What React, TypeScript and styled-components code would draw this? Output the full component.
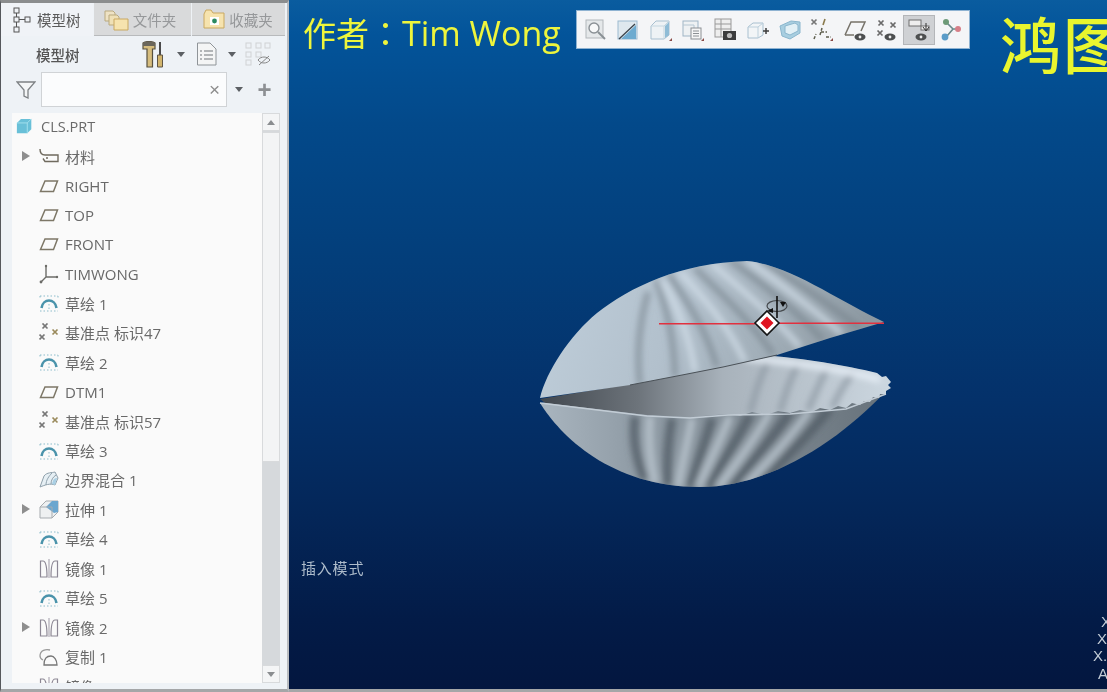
import React from "react";
import styled, { createGlobalStyle } from "styled-components";

const Global = createGlobalStyle`
  html, body { margin: 0; padding: 0; width: 1107px; height: 692px; overflow: hidden; background: #03153d; }
`;
const font = `"Noto Sans CJK SC", "Noto Sans", sans-serif`;
const Page = styled.div`
  display: flex; width: 1107px; height: 692px; overflow: hidden;
  font-family: ${font}; filter: blur(0.45px);
`;
const Sidebar = styled.aside`
  width: 289px; flex: none; height: 692px; box-sizing: border-box; display: flex; flex-direction: column;
  background: #eef2f6; border-top: 3px solid #8b8d8e; border-bottom: 3px solid #a4a6a8;
  border-left: 1px solid #55585c; border-right: 2px solid #b9bcc0;
`;
const Tabs = styled.div`display: flex; height: 33px; padding-right: 2px; gap: 1px; flex: none;`;
const Tab = styled.div<{ $active?: boolean; $w: number }>`
  width: ${p => p.$w}px; display: flex; align-items: center; gap: ${p => (p.$active ? 5 : 3)}px; padding-left: ${p => (p.$active ? 12 : 10)}px; box-sizing: border-box;
  font-size: 14.5px; color: ${p => (p.$active ? "#5a5a5a" : "#96989a")};
  background: ${p => (p.$active ? "#f0f3f7" : "#d9dadb")};
  border-bottom: ${p => (p.$active ? "none" : "1px solid #b8babc")};
`;
const ToolRow = styled.div`display: flex; align-items: center; height: 36px; padding-left: 35px; flex: none;`;
const ToolTitle = styled.div`width: 106px; font-size: 14.5px; font-weight: 500; color: #555;`;
const IconGap = styled.span<{ $w: number }>`display: inline-flex; width: ${p => p.$w}px; justify-content: center; align-items: center;`;
const FilterRow = styled.div`display: flex; align-items: center; height: 35px; flex: none;`;
const FilterIcon = styled.div`width: 40px; display: flex; justify-content: center; padding-left: 10px; box-sizing: border-box;`;
const Search = styled.div`
  width: 186px; height: 35px; box-sizing: border-box; background: #fbfcfd; border: 1px solid #d0d3d6;
  display: flex; align-items: center; justify-content: flex-end; padding-right: 6px; color: #8e8e8e; font-size: 19px;
  font-family: "Liberation Sans", sans-serif;
`;
const Arrow = styled.span<{ $c?: string }>`
  width: 0; height: 0; border-left: 4.5px solid transparent; border-right: 4.5px solid transparent;
  border-top: 5px solid ${p => p.$c ?? "#5c6064"};
`;
const Plus = styled.span`font-size: 24px; font-weight: 700; color: #8d9093; line-height: 1; font-family: "Liberation Sans", sans-serif;`;
const TreeWrap = styled.div`
  margin: 6px 7px 0 11px; height: 570px; display: flex; flex: none; background: #fafafa; overflow: hidden;
`;
const Tree = styled.div`flex: 1; margin-top: -1px; overflow: hidden; min-width: 0;`;
const Row = styled.div`
  display: flex; align-items: center; height: 29.45px; color: #696969; font-size: 15px; white-space: nowrap;
  font-family: "Open Sans", ${font};
`;
const RootRow = styled(Row)`padding-left: 4px; gap: 7px; font-size: 14.5px;`;
const Twist = styled.span`width: 27px; padding-left: 10px; box-sizing: border-box; display: flex; flex: none;`;
const TwistMark = styled.span`
  width: 0; height: 0; border-top: 5px solid transparent; border-bottom: 5px solid transparent; border-left: 8px solid #8e8e8e;
`;
const RowIcon = styled.span`width: 26px; flex: none; display: flex; align-items: center;`;
const Scroll = styled.div`width: 18px; flex: none; display: flex; flex-direction: column; background: #d6d9dc;`;
const ScrollBtn = styled.div`
  height: 18px; background: #f4f5f6; border: 1px solid #d8dadc; box-sizing: border-box; display: flex; align-items: center; justify-content: center;
`;
const ScrollUp = styled.span`width: 0; height: 0; border-left: 4px solid transparent; border-right: 4px solid transparent; border-bottom: 5px solid #8a8d90;`;
const Thumb = styled.div`height: 330px; margin-top: 1px; background: #f3f4f5; border: 1px solid #d8dadc; box-sizing: border-box;`;
const Track = styled.div`flex: 1;`;

const Viewport = styled.main`
  position: relative; flex: 1; height: 692px; overflow: hidden;
  background: linear-gradient(180deg, #0a5c9f 0%, #03549a 5%, #03498a 18%, #033e7a 38%, #04316a 58%, #042658 75%, #031b47 90%, #03163f 100%);
  border-bottom: 3px solid #a4a6a8; box-sizing: border-box;
`;
const Author = styled.div`
  position: absolute; left: 14px; top: 8px; font-size: 33px; line-height: 48px; color: #eef53c; white-space: nowrap;
  font-family: "Noto Sans CJK TC", sans-serif;
`;
const AuthorLatin = styled.span`font-family: "Open Sans", sans-serif; font-size: 34px;`;
const Brand = styled.div`
  position: absolute; left: 711px; top: 1px; font-size: 61px; font-weight: 500; line-height: 84px; color: #e9f52e; white-space: nowrap; letter-spacing: 2px;
`;
const Bar = styled.div`
  position: absolute; left: 287px; top: 10px; width: 394px; height: 39px; box-sizing: border-box;
  background: #f4f5f7; border: 1px solid #8fb3d2; display: flex; align-items: center; padding-left: 3px;
`;
const ToolBtn = styled.div<{ $active?: boolean }>`
  width: 32.3px; height: 30px; flex: none; display: flex; align-items: center; justify-content: center; box-sizing: border-box;
  background: ${p => (p.$active ? "#cfd1d4" : "transparent")};
  border: 1px solid ${p => (p.$active ? "#b4b6b9" : "transparent")};
`;
const Mode = styled.div`position: absolute; left: 12px; top: 557px; font-size: 15px; color: #aebccb; letter-spacing: 0.8px;`;
const Coord = styled.div<{ $l: number; $t: number }>`
  position: absolute; left: ${p => p.$l}px; top: ${p => p.$t}px; color: #c3ccd6; font-size: 15px; line-height: 18px;
  font-family: "Liberation Sans", sans-serif;
`;
const Model = styled.svg`position: absolute; left: 241px; top: 250px;`;

const S = (p: { w?: number; h?: number; v?: string; children: React.ReactNode }) => (
  <svg width={p.w ?? 20} height={p.h ?? 20} viewBox={p.v ?? "0 0 20 20"} fill="none">{p.children}</svg>
);
const Plane = () => <S><path d="M1.5 15.5 L6 5 H18.5 L14.5 15.5 Z" stroke="#7d7767" strokeWidth="1.5" /></S>;
const Csys = () => <S><path d="M7 2 V13 H18 M7 13 L2 18" stroke="#6c6c68" strokeWidth="1.4" /><circle cx="7" cy="2" r="1.2" fill="#6c6c68" /><circle cx="18" cy="13" r="1.2" fill="#6c6c68" /><circle cx="2" cy="18" r="1.4" fill="#6c6c68" /></S>;
const Sketch = () => <S><path d="M2.5 15 C4 5 16 5 17.5 15" stroke="#4a93ab" strokeWidth="2.6" /><path d="M1 3 H19 M1 18 H19 M1 3 V6 M19 3 V6 M10 11 v5" stroke="#8cbccb" strokeWidth="1" strokeDasharray="1.5 2" /></S>;
const X = ({ x, y, c }: { x: number; y: number; c: string }) => <path d={`M${x - 2.5} ${y - 2.5} l5 5 M${x + 2.5} ${y - 2.5} l-5 5`} stroke={c} strokeWidth="1.7" />;
const Points = () => <S><X x={6} y={3} c="#777" /><X x={16} y={9} c="#9a8a5c" /><X x={3} y={14} c="#777" /></S>;
const Boundary = () => <S><path d="M1 17 L5 6 C8 2 13 3 16 2 L19 8 L16 15 C11 13 6 15 1 17 Z" fill="#e6eff4" stroke="#8fa0ab" strokeWidth="1" /><path d="M7 15 C7 10 10 6 13 3 M12 14 C12 10 14 7 17 5" stroke="#8fa0ab" /><path d="M13 14 C14 10 15 8 18 8 L16 15 Z" fill="#a9cfe4" /></S>;
const Extrude = () => <S><path d="M1 8 L7 2 H19 V13 L13 19 H1 Z" fill="#eef0f1" stroke="#a6abaf" /><path d="M7 8 L13 2 H19 V13 L15 14 Z" fill="#6aa6cf" /><path d="M1 8 H13 V19" stroke="#a6abaf" /></S>;
const Mirror = () => <S><path d="M1.5 19 V3 H4 C7 3 8 10 8 19 Z M18.5 19 V3 H16 C13 3 12 10 12 19 Z" stroke="#8c8794" strokeWidth="1.2" /><path d="M10 1 V20" stroke="#c2bfc7" strokeWidth="1.6" /></S>;
const Copy = () => <S><path d="M1 9 C1 3 7 2 11 3 M1 9 C1 11 2 12 4 13" stroke="#9a9a9a" strokeWidth="1.3" /><path d="M5 18 C5 11 8 9 12 9 C15 9 18 13 18 18 Z" stroke="#777" strokeWidth="1.3" /></S>;
const Material = () => <S><path d="M1 3 C1 8 3 9 6 9 H19 V15.5 H6 L4 12.5" stroke="#6f6a5e" strokeWidth="1.4" /><circle cx="8" cy="12" r="1" fill="#6f6a5e" /></S>;
const Part = () => <S w={18} h={18}><path d="M1 5.5 L5.5 1 H17 V12.5 L12.5 17 H1 Z" fill="#69c0d8" /><path d="M1 5.5 H12.5 L17 1 M12.5 5.5 V17" stroke="#a8e2ef" /></S>;

const TabTree = () => <S w={19} h={26} v="0 0 19 26"><rect x="1" y="1" width="5" height="5" stroke="#555" /><rect x="1" y="10" width="5" height="5" stroke="#555" /><rect x="1" y="20" width="5" height="5" stroke="#555" /><rect x="12" y="10" width="5" height="5" stroke="#555" /><path d="M3.5 6 V10 M3.5 15 V20 M6 12.5 H12" stroke="#555" /></S>;
const Folder = ({ star }: { star?: boolean }) => <S w={24} h={24} v="0 0 24 24"><path d="M2 7 L2 21 H22 V6 H11 L9 3 H4 Z" fill="#f6e3ae" stroke="#c9a860" />{star && <rect x="8" y="10" width="9" height="8" fill="#fff" />}{star && <circle cx="12.5" cy="14" r="2.4" fill="#2b8a60" />}</S>;
const Folders = () => <S w={26} h={24} v="0 0 26 24"><path d="M1 4 H9 L11 6 V14 H1 Z" fill="#eee2c4" stroke="#b9a97f" /><path d="M5 8 H13 L15 10 V18 H5 Z" fill="#efe0b6" stroke="#b9a97f" /><path d="M10 12 H24 V23 H10 Z" fill="#f6e3ae" stroke="#c9a860" /></S>;
const Tools = () => <S w={24} h={27} v="0 0 24 27"><path d="M1 2 C4 0 10 0 13 2 V8 H10.5 V26 H5 V8 H1 Z" fill="#d6bd7e" stroke="#57503f" strokeWidth="1.2" /><path d="M1 2 C4 0 10 0 13 2 V5 H1 Z" fill="#6b675c" /><rect x="17" y="1" width="2" height="13" fill="#4a4a4a" /><path d="M15.5 14 H20.5 V26 H15.5 Z" fill="#d2b56d" stroke="#5f5545" /></S>;
const Doc = () => <S w={22} h={24} v="0 0 22 24"><path d="M1.5 1 H14 L20 7 V23 H1.5 Z" fill="#f4f5f5" stroke="#8f9498" /><path d="M4 9 h2 M8 9 h9 M4 13 h2 M8 13 h9 M4 17 h2 M8 17 h9" stroke="#71767b" strokeWidth="1.2" /></S>;
const HiddenTree = () => <S w={26} h={24} v="0 0 26 24"><g stroke="#d0d2d4"><rect x="1" y="1" width="5" height="5" /><rect x="1" y="10" width="5" height="5" /><rect x="1" y="18" width="5" height="5" /><rect x="11" y="1" width="5" height="5" /><rect x="20" y="1" width="5" height="5" /><rect x="11" y="10" width="5" height="5" /></g><path d="M13 18 C16 14 22 14 25 18 C22 22 16 22 13 18 Z" stroke="#888" /><path d="M14 23 L24 14" stroke="#888" /></S>;
const Funnel = () => <S w={20} h={18} v="0 0 20 18"><path d="M1 1 H19 L12 9 V17 L8 15 V9 Z" stroke="#7d8184" strokeWidth="1.3" fill="#f4f6f7" /></S>;

const T = { w: 24, h: 24, v: "0 0 24 24" };
const Eye = ({ x = 17, y = 19 }: { x?: number; y?: number }) => <g><ellipse cx={x} cy={y} rx="5.5" ry="3.4" fill="#4d4f50" /><circle cx={x} cy={y} r="1.4" fill="#eee" /></g>;
const Corner = () => <path d="M23 23 V20 L20 23 Z" fill="#8a4a46" />;
const toolIcons: React.ReactNode[] = [
  <S {...T}><rect x="2" y="2" width="17" height="18" fill="#e5e8ea" stroke="#b2b7bb" /><circle cx="10" cy="10" r="5" stroke="#8a9095" strokeWidth="1.4" fill="#f7f8f9" /><path d="M14 14 L21 21" stroke="#8a9095" strokeWidth="2" /></S>,
  <S {...T}><rect x="2" y="3" width="19" height="18" fill="#dfe8ee" stroke="#9cbad0" /><path d="M6 20 L20 7 V21 H6 Z" fill="#6eabd0" /><path d="M3 21 L19 6" stroke="#39424a" strokeWidth="1.3" /></S>,
  <S {...T}><path d="M2 8 L7 3 H20 V17 L15 21 H2 Z" fill="#eef2f5" stroke="#a9c0d0" /><path d="M2 8 H15 V21 M15 8 L20 3" stroke="#c4d6e0" /><path d="M16 8 L20 4 V17 L16 20 Z" fill="#8fbcd6" /><Corner /></S>,
  <S {...T}><rect x="2" y="3" width="15" height="15" fill="#eef1f3" stroke="#9fb5c6" /><path d="M2 7 H13 V18" stroke="#b5c6d2" /><rect x="10" y="10" width="10" height="11" fill="#f6f6f6" stroke="#8c9094" /><path d="M12 13 h6 M12 15.5 h6 M12 18 h6" stroke="#8c9094" /><Corner /></S>,
  <S {...T}><rect x="2" y="1" width="16" height="18" fill="#eee" stroke="#999" /><path d="M2 6 H18 M2 11 H18 M8 1 V19" stroke="#999" /><rect x="10" y="13" width="13" height="9" fill="#3b3c3d" /><circle cx="16.5" cy="17.5" r="2.6" fill="#bbb" /></S>,
  <S {...T}><path d="M2 9 L7 5 H17 V17 L12 20 H2 Z" fill="#f2f5f7" stroke="#a9c0d0" /><path d="M2 9 H12 V20 M12 9 L17 5" stroke="#bdd0dc" /><path d="M17 13 H23 M20 10 V16" stroke="#3d3d3d" strokeWidth="1.5" /></S>,
  <S {...T}><path d="M2 8 L13 3 L22 4 V15 L12 21 L4 18 Z" fill="#a8cee0" stroke="#8ab6cd" /><path d="M7 8 L17 5 L20 7 V13 L12 17 L7 15 Z" fill="#e2f0f6" stroke="#8ab6cd" /></S>,
  <S {...T}><X x={4} y={4} c="#777" /><path d="M15 1 l-2 6" stroke="#8a7a4c" strokeWidth="1.6" /><path d="M4 21 l2 -5 M10 17 l2 -7 M11 14 h6 M16 19 h5" stroke="#5e5e4e" strokeWidth="1.5" strokeDasharray="3 1.5" /><Corner /></S>,
  <S {...T}><path d="M2 17 L8 4 H22 L18 13" stroke="#77736a" strokeWidth="1.5" /><path d="M2 17 H11" stroke="#77736a" strokeWidth="1.5" /><Eye /></S>,
  <S {...T}><X x={6} y={5} c="#6a6a6a" /><X x={18} y={7} c="#6a6a6a" /><X x={5} y={15} c="#6a6a6a" /><Eye x={15} y={19} /></S>,
  <S {...T}><rect x="2" y="2" width="12" height="6" stroke="#6e6e6e" fill="#eee" /><rect x="14" y="8" width="8" height="4" stroke="#6e6e6e" fill="#eee" /><path d="M19 5 V12 M16 9 L19 13 L22 9" stroke="#333" /><Eye x={14} y={19} /></S>,
  <S {...T}><path d="M8 5 L14 11 L8 18 M14 11 H20" stroke="#6a8a8a" strokeWidth="1.6" /><circle cx="7" cy="4" r="3" fill="#6d9a78" /><circle cx="6" cy="19" r="3.4" fill="#5a9cc8" /><circle cx="19" cy="11" r="3" fill="#d67f88" /></S>,
];

const rows: { n: string; i: React.ReactNode; t?: boolean }[] = [
  { n: "材料", i: <Material />, t: true },
  { n: "RIGHT", i: <Plane /> },
  { n: "TOP", i: <Plane /> },
  { n: "FRONT", i: <Plane /> },
  { n: "TIMWONG", i: <Csys /> },
  { n: "草绘 1", i: <Sketch /> },
  { n: "基准点 标识47", i: <Points /> },
  { n: "草绘 2", i: <Sketch /> },
  { n: "DTM1", i: <Plane /> },
  { n: "基准点 标识57", i: <Points /> },
  { n: "草绘 3", i: <Sketch /> },
  { n: "边界混合 1", i: <Boundary /> },
  { n: "拉伸 1", i: <Extrude />, t: true },
  { n: "草绘 4", i: <Sketch /> },
  { n: "镜像 1", i: <Mirror /> },
  { n: "草绘 5", i: <Sketch /> },
  { n: "镜像 2", i: <Mirror />, t: true },
  { n: "复制 1", i: <Copy /> },
  { n: "镜像 3", i: <Mirror /> },
];

const topOutline = "M540 398 C546 372 570 335 597 313 C630 287 680 263 747 261 C790 265 840 302 884 322 L830 338 L777 355 L723 367 L677 376 L630 385 Z";
const innerOutline = "M540 399 L630 384 L677 375 L723 366 L773 356 C800 358 845 365 877 373 L882 377 L886 376 L891 382 L888 385 L891 388 L886 391 L886 394 L880 394 L879 398 L873 397 L870 402 L864 401 L860 405 L852 403 L846 408 L838 406 L830 410 L820 408 L812 412 L800 410 L790 413 L778 411 L766 415 L752 412 L740 416 L728 414 L690 417 L647 415 L545 403 Z";
const lowOutline = "M540 403 L650 395 L885 385 L885 392 C840 440 770 487 700 487 C610 487 560 435 540 403 Z";

const topRibs = [
  "M640 385 C636 350 640 320 648 292",
  "M675 377 C674 340 668 310 656 280", "M717 367 C706 330 690 305 668 274",
  "M773 354 C750 320 725 298 695 268", "M823 340 C795 310 765 285 730 260",
  "M860 328 C830 305 795 280 760 260",
];
const topLight = [
  "M695 372 C690 340 680 310 662 280",
  "M745 362 C728 325 705 300 680 272", "M800 347 C775 318 745 292 712 264", "M842 334 C812 308 780 284 748 260",
];
const lowDark = ["M635 416 C632 440 636 460 645 480", "M672 418 C668 440 666 460 668 486", "M712 418 C706 440 698 462 690 488", "M750 414 C738 440 722 462 708 488", "M790 412 C772 440 752 462 730 488", "M830 408 C810 435 785 458 760 484"];
const lowLight = ["M650 416 C648 440 650 462 655 484", "M692 418 C688 442 682 462 678 488", "M730 416 C720 442 708 464 698 488", "M770 412 C755 440 735 465 718 488", "M810 410 C790 438 768 462 745 486"];
const inRibs = ["M770 358 C760 375 755 395 750 413", "M800 360 C790 378 785 395 780 412", "M830 364 C820 380 815 395 808 410", "M855 370 C845 382 838 395 832 408"];

const Shell = () => (
  <Model width={370} height={245} viewBox="530 250 370 245">
    <defs>
      <linearGradient id="gt" x1="0" y1="0" x2="1" y2="0.15"><stop offset="0" stopColor="#c0cfdb" /><stop offset="0.45" stopColor="#b2c0cc" /><stop offset="0.75" stopColor="#a0adb7" /><stop offset="1" stopColor="#8c98a1" /></linearGradient>
      <linearGradient id="gi" x1="0" y1="0" x2="1" y2="0"><stop offset="0" stopColor="#41474e" /><stop offset="0.28" stopColor="#6d747b" /><stop offset="0.52" stopColor="#a8b2bb" /><stop offset="1" stopColor="#ccd7e0" /></linearGradient>
      <linearGradient id="gl" x1="0" y1="0" x2="1" y2="0"><stop offset="0" stopColor="#a9b5bf" /><stop offset="0.25" stopColor="#929ea8" /><stop offset="0.7" stopColor="#7a858e" /><stop offset="1" stopColor="#67727b" /></linearGradient>
      <filter id="b4" x="-20%" y="-20%" width="140%" height="140%"><feGaussianBlur stdDeviation="3.4" /></filter>
      <clipPath id="ct"><path d={topOutline} /></clipPath>
      <clipPath id="ci"><path d={innerOutline} /></clipPath>
      <clipPath id="cl"><path d={lowOutline} /></clipPath>
    </defs>
    <path d={lowOutline} fill="url(#gl)" />
    <g clipPath="url(#cl)">
      <g filter="url(#b4)" fill="none">
        {lowDark.map(d => <path key={d} d={d} stroke="#525c65" strokeOpacity=".8" strokeWidth="9" />)}
        {lowLight.map(d => <path key={d} d={d} stroke="#b8c4ce" strokeOpacity=".85" strokeWidth="8" />)}
      </g>
    </g>
    <path d={innerOutline} fill="url(#gi)" />
    <g clipPath="url(#ci)">
      <g filter="url(#b4)" fill="none">
        {inRibs.map(d => <path key={d} d={d} stroke="#8d99a4" strokeOpacity=".8" strokeWidth="6" />)}
        <path d="M745 358 C790 362 840 368 880 380" stroke="#e6eef6" strokeWidth="6" />
      </g>
    </g>
    <path d="M540 403 L647 416 L690 418 L728 415 L790 414 L846 409 L886 394" fill="none" stroke="#c2ccd5" strokeWidth="1.6" />
    <path d={topOutline} fill="url(#gt)" />
    <g clipPath="url(#ct)">
      <g filter="url(#b4)" fill="none">
        {topRibs.map(d => <path key={d} d={d} stroke="#76828c" strokeOpacity=".65" strokeWidth="6" />)}
        {topLight.map(d => <path key={d} d={d} stroke="#d6e2ec" strokeOpacity=".75" strokeWidth="6" />)}
      </g>
    </g>
    <path d="M630 385 L677 376 L723 367 L777 355" fill="none" stroke="#4a5157" strokeWidth="1" />
    <rect x="659" y="323" width="96" height="1.5" fill="#e2303e" />
    <rect x="778" y="322.5" width="106" height="1.5" fill="#e2303e" />
    <ellipse cx="777" cy="306" rx="10" ry="5.5" fill="none" stroke="#45494d" strokeWidth="1.2" />
    <path d="M777 296 V318" stroke="#111" strokeWidth="1.6" />
    <path d="M767 311 l6 -3 v5 Z M780 302 h6 l-3 5 Z" fill="#111" />
    <path d="M767 311 L779 323 L767 335 L755 323 Z" fill="#fff" stroke="#151515" strokeWidth="1.6" />
    <path d="M767 316.5 L773.5 323 L767 329.5 L760.5 323 Z" fill="#e01420" />
  </Model>
);

export default function App() {
  return (
    <>
      <Global />
      <Page>
        <Sidebar>
          <Tabs>
            <Tab $active $w={92}><TabTree />模型树</Tab>
            <Tab $w={98}><Folders />文件夹</Tab>
            <Tab $w={93}><Folder star />收藏夹</Tab>
          </Tabs>
          <ToolRow>
            <ToolTitle>模型树</ToolTitle>
            <Tools />
            <IconGap $w={30}><Arrow /></IconGap>
            <Doc />
            <IconGap $w={27}><Arrow /></IconGap>
            <HiddenTree />
          </ToolRow>
          <FilterRow>
            <FilterIcon><Funnel /></FilterIcon>
            <Search>×</Search>
            <IconGap $w={24}><Arrow /></IconGap>
            <IconGap $w={27}><Plus>+</Plus></IconGap>
          </FilterRow>
          <TreeWrap>
            <Tree>
              <RootRow><Part />CLS.PRT</RootRow>
              {rows.map(r => (
                <Row key={r.n}>
                  <Twist>{r.t && <TwistMark />}</Twist>
                  <RowIcon>{r.i}</RowIcon>
                  {r.n}
                </Row>
              ))}
            </Tree>
            <Scroll>
              <ScrollBtn><ScrollUp /></ScrollBtn>
              <Thumb />
              <Track />
              <ScrollBtn><Arrow $c="#8a8d90" /></ScrollBtn>
            </Scroll>
          </TreeWrap>
        </Sidebar>
        <Viewport>
          <Author>作者：<AuthorLatin>Tim Wong</AuthorLatin></Author>
          <Bar>
            {toolIcons.map((ic, i) => <ToolBtn key={i} $active={i === 10}>{ic}</ToolBtn>)}
          </Bar>
          <Brand>鸿图</Brand>
          <Shell />
          <Mode>插入模式</Mode>
          <Coord $l={812} $t={613}>X</Coord>
          <Coord $l={808} $t={630}>X</Coord>
          <Coord $l={804} $t={647}>X.</Coord>
          <Coord $l={809} $t={665}>A</Coord>
        </Viewport>
      </Page>
    </>
  );
}
